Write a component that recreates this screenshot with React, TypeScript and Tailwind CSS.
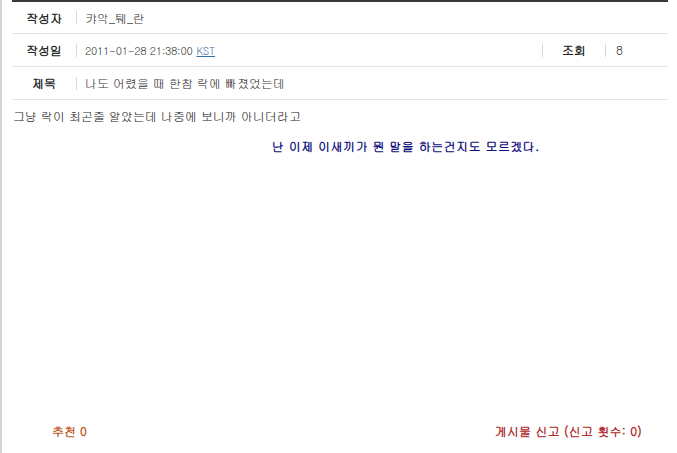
const KR = "font-['Gulim','Noto_Sans_CJK_KR',sans-serif]";

function Sep() {
  return <span className="mx-0 h-[13px] w-px shrink-0 bg-[#d8d8d8]" />;
}

function Label({ children, w = "w-[64px]" }: { children: React.ReactNode; w?: string }) {
  return (
    <span className={`${w} shrink-0 text-center text-[12px] font-bold text-[#222]`}>{children}</span>
  );
}

export default function App() {
  return (
    <div className={`${KR} h-[453px] w-[677px] bg-white text-[12px] text-[#333]`}>
      <div className="flex h-full border-l-2 border-[#d4d4d4]">
        <div className="flex flex-1 flex-col">
          <div className="ml-[10px] mr-[7px] w-[656px] border-t-2 border-[#3a3a3a]">
            <div className="flex h-[32px] items-center border-b border-[#e3e3e3]">
              <Label>작성자</Label>
              <Sep />
              <span className="ml-[8px]">캬악_퉤_란</span>
            </div>
            <div className="flex h-[33px] items-center border-b border-[#e3e3e3]">
              <Label>작성일</Label>
              <Sep />
              <span className="ml-[8px]">
                <span className="text-[11px] tracking-[-0.3px]">2011-01-28 21:38:00</span>{" "}
                <span className="text-[10px] text-[#3b6ea5] underline">KST</span>
              </span>
              <span className="flex-1" />
              <Sep />
              <Label w="w-[62px]">조회</Label>
              <Sep />
              <span className="ml-[10px] w-[52px]">8</span>
            </div>
            <div className="flex h-[33px] items-center border-b border-[#e3e3e3]">
              <Label>제목</Label>
              <Sep />
              <span className="ml-[8px]">나도 어렸을 때 한참 락에 빠졌었는데</span>
            </div>
          </div>
          <div className="flex flex-1 flex-col px-[11px] pt-[8px]">
            <p className="text-[12px] leading-[16px] text-[#222]">
              그냥 락이 최곤줄 알았는데 나중에 보니까 아니더라고
            </p>
            <p className="mt-[14px] pl-[259px] text-[12px] font-bold leading-[16px] tracking-[0.45px] text-[#101080]">
              난 이제 이새끼가 뭔 말을 하는건지도 모르겠다.
            </p>
            <div className="flex-1" />
            <div className="mb-[13px] flex items-center justify-between pl-[39px] pr-[24px]">
              <span className="font-bold text-[#c0571e]">추천 0</span>
              <span className="font-bold tracking-[0.2px] text-[#b0282a]">게시물 신고 (신고 횟수: 0)</span>
            </div>
          </div>
        </div>
      </div>
    </div>
  );
}
